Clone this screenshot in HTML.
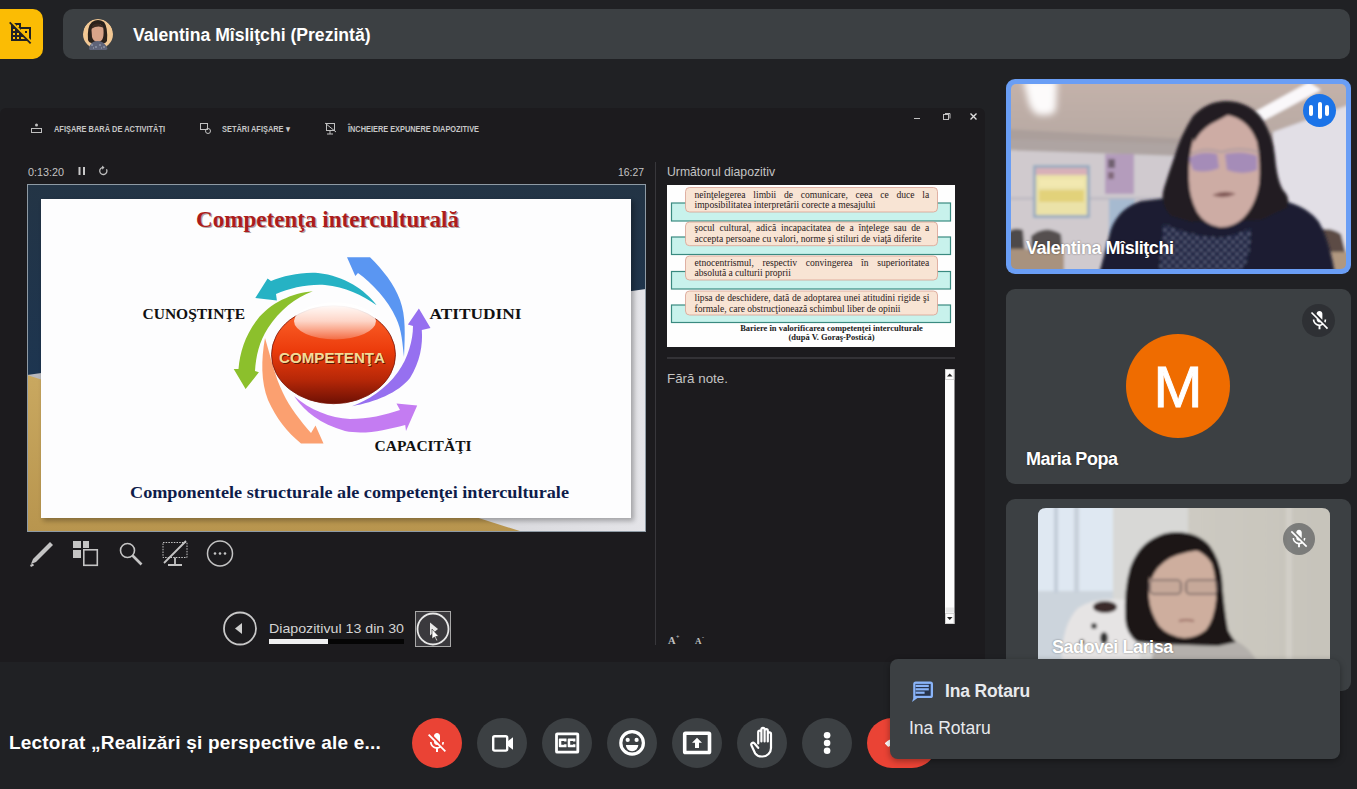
<!DOCTYPE html>
<html><head><meta charset="utf-8">
<style>
*{margin:0;padding:0;box-sizing:border-box}
html,body{width:1357px;height:789px;overflow:hidden;background:#202124;font-family:"Liberation Sans",sans-serif;position:relative}
.a{position:absolute}
.t{position:absolute;white-space:nowrap;line-height:1}
.btn{position:absolute;top:718px;width:50px;height:50px;border-radius:25px;background:#3c4043}
.btn svg{position:absolute;left:10px;top:10px;width:30px;height:30px;fill:#fff}
.name{position:absolute;white-space:nowrap;line-height:1;color:#fff;font-weight:bold;font-size:18px;letter-spacing:-.45px;text-shadow:0 0 2px rgba(0,0,0,.45)}
</style></head><body>

<!-- top bar -->
<div class="a" style="left:-10px;top:9px;width:53px;height:50px;border-radius:10px;background:#fbbc04"></div>
<svg class="a" style="left:8.5px;top:20px;width:24px;height:24px" viewBox="0 0 24 24"><path fill="#202124" d="M8 5h2v2h-.9L12 9.9V9h8v8.9l2 2V7H12V3H5.1L8 5.9zm8 6h2v2h-2zM1.3 1.8L.1 3.1 2 5v16h16l3 3 1.3-1.3-21-20.9zM6 19H4v-2h2v2zm0-4H4v-2h2v2zm0-4H4V9h2v2zm4 8H8v-2h2v2zm0-4H8v-2h2v2zm2 4v-2h2l2 2h-4z"/></svg>
<div class="a" style="left:63px;top:9px;width:1287px;height:50px;border-radius:10px;background:#3c4043"></div>
<svg class="a" style="left:78px;top:14px" width="40" height="40" viewBox="0 0 40 40"><defs><filter id="ba" x="-20%" y="-20%" width="140%" height="140%"><feGaussianBlur stdDeviation="0.6"/></filter><clipPath id="ca"><path d="M5 20A15 15 0 0 1 35 20V40H5z"/></clipPath></defs>
<g filter="url(#ba)"><g clip-path="url(#ca)"><circle cx="20" cy="20" r="15" fill="#f2c894"/></g>
<path d="M10 26 Q9 12 14 8 Q20 4 26 8 Q30 13 29 27 Q27 30 25 29 L14 29 Q11 29 10 26z" fill="#2c201c"/>
<path d="M13.5 16 Q14 10 20 10 Q25.5 10.5 25.5 16 Q26 23 24 26 Q21.5 28.5 19 28 Q15 27 14 23z" fill="#d8a48a"/>
<path d="M13 15 Q15 9 20 9.5 Q24 10 26 14 Q22 11.5 17 13z" fill="#3a2a22"/>
<path d="M11 35 Q12 27 19.5 27 Q27 27 29.5 35 L28 36 L12 36z" fill="#5e6478"/>
<path d="M13 31h2M17 33h2M21 31h2M25 33h2M15 34h1M23 34h1" stroke="#a4aabb" stroke-width="1"/>
</g></svg>
<div class="t" style="left:133px;top:26.5px;font-size:17.6px;font-weight:bold;color:#fff">Valentina Mîsliţchi (Prezintă)</div>

<!-- presentation window -->
<div class="a" id="pres" style="left:0;top:108px;width:985px;height:554px;background:#1c1b1e;border-radius:6px 6px 0 0"></div>
<svg class="a" style="left:0;top:0" width="1357" height="789" viewBox="0 0 1357 789">
<defs>
  <linearGradient id="ball" x1="0" y1="0" x2="0" y2="1">
    <stop offset="0" stop-color="#ff6a30"/>
    <stop offset="0.45" stop-color="#ec3c0c"/>
    <stop offset="0.75" stop-color="#b82808"/>
    <stop offset="1" stop-color="#6e1004"/>
  </linearGradient>
  <linearGradient id="hl" x1="0" y1="0" x2="0" y2="1">
    <stop offset="0" stop-color="#fff" stop-opacity="1"/>
    <stop offset="0.5" stop-color="#fff" stop-opacity="0.75"/>
    <stop offset="1" stop-color="#fff" stop-opacity="0.2"/>
  </linearGradient>
  <linearGradient id="gray" x1="0" y1="0" x2="1" y2="0">
    <stop offset="0" stop-color="#b8b8bc"/>
    <stop offset="1" stop-color="#e4e4e8"/>
  </linearGradient>
  <linearGradient id="blue" x1="0" y1="0" x2="0" y2="1">
    <stop offset="0" stop-color="#233445"/>
    <stop offset="1" stop-color="#1d3550"/>
  </linearGradient>
  <linearGradient id="gold" x1="0" y1="0" x2="0" y2="1">
    <stop offset="0" stop-color="#c9a860"/>
    <stop offset="1" stop-color="#b8954e"/>
  </linearGradient>
</defs>
<!-- toolbar -->
<g fill="#c6c6c6" font-family="Liberation Sans" font-weight="bold" font-size="8.5">
  <text x="54" y="132" textLength="111" lengthAdjust="spacingAndGlyphs">AFIŞARE BARĂ DE ACTIVITĂŢI</text>
  <text x="222" y="132" textLength="68" lengthAdjust="spacingAndGlyphs">SETĂRI AFIŞARE ▾</text>
  <text x="348" y="132" textLength="131" lengthAdjust="spacingAndGlyphs">ÎNCHEIERE EXPUNERE DIAPOZITIVE</text>
</g>
<g stroke="#c0c0c0" fill="none" stroke-width="1">
  <rect x="31.5" y="128.5" width="10" height="4"/><circle cx="36.5" cy="125" r="1.5" fill="#c0c0c0" stroke="none"/>
  <rect x="200.5" y="123.5" width="7" height="6"/><circle cx="208" cy="131" r="2.5"/>
  <rect x="326.5" y="123.5" width="8" height="7"/><path d="M330 131v3M327 134h6M325 123l11 9"/>
  <path d="M914 118.5h6"/>
  <rect x="943.5" y="114.5" width="5" height="5"/><path d="M945 113.5h5v5"/>
  <path d="M970.5 113.5l6 6M976.5 113.5l-6 6" stroke-width="1.4" stroke="#e0e0e0"/>
</g>
<g fill="#c4c4c4" font-family="Liberation Sans" font-size="11.5">
  <text x="28" y="175.5" textLength="36" lengthAdjust="spacingAndGlyphs">0:13:20</text>
  <text x="618" y="175.5" textLength="26" lengthAdjust="spacingAndGlyphs">16:27</text>
  <text x="667" y="175.5" font-size="12.2" textLength="108" lengthAdjust="spacingAndGlyphs">Următorul diapozitiv</text>
  <text x="667" y="382.5" font-size="13" textLength="61" lengthAdjust="spacingAndGlyphs">Fără note.</text>
</g>
<rect x="78.5" y="167" width="2" height="8" fill="#c8c8c8"/><rect x="83" y="167" width="2" height="8" fill="#c8c8c8"/>
<path d="M106.5 169.2a3.6 3.6 0 1 1 -3.2 -1.9" stroke="#c0c0c0" stroke-width="1.3" fill="none"/><path d="M102 165.5l2.5 2-2.2 2.2z" fill="#c0c0c0"/>

<!-- dividers -->
<rect x="655" y="162" width="1" height="483" fill="#38373b"/>
<rect x="667" y="357" width="288" height="2" fill="#333236"/>

<!-- main slide -->
<rect x="27" y="184" width="619" height="348" fill="url(#gray)"/>
<polygon points="27,184 646,184 646,289 27,375" fill="url(#blue)"/>
<polygon points="27,375 523,532 27,532" fill="url(#gold)"/>
<rect x="27.5" y="184.5" width="618" height="347" fill="none" stroke="#8e9aa4" stroke-width="1"/>
<filter id="sh" x="-5%" y="-5%" width="110%" height="110%"><feGaussianBlur stdDeviation="2.5"/></filter><rect x="43" y="201" width="591" height="320" fill="#000" opacity="0.28" filter="url(#sh)"/>
<rect x="41" y="199" width="590" height="319" fill="#fdfdfe"/>

<text x="196" y="227" font-family="Liberation Serif" font-weight="bold" font-size="23" fill="#b0a8a8" textLength="263" lengthAdjust="spacingAndGlyphs" transform="translate(1.2,1.2)">Competenţa interculturală</text>
<text x="196" y="227" font-family="Liberation Serif" font-weight="bold" font-size="23" fill="#ac1c1c" textLength="263" lengthAdjust="spacingAndGlyphs">Competenţa interculturală</text>
<g font-family="Liberation Serif" font-weight="bold" font-size="15.5" fill="#111">
  <text x="142.5" y="319" textLength="102.5" lengthAdjust="spacingAndGlyphs">CUNOŞTINŢE</text>
  <text x="429.5" y="319" textLength="92" lengthAdjust="spacingAndGlyphs">ATITUDINI</text>
  <text x="374.5" y="450.5" textLength="97" lengthAdjust="spacingAndGlyphs">CAPACITĂŢI</text>
</g>
<text x="130" y="498" font-family="Liberation Serif" font-weight="bold" font-size="16.5" fill="#0e1c4a" textLength="439" lengthAdjust="spacingAndGlyphs">Componentele  structurale ale competenţei interculturale</text>

<!-- arrows -->
<path fill="#26b2c4" d="M376.6 305.2 C365 290 345 276 318 273 C300 272 284 276 271 281 L267.6 278.6 L255.3 297.9 L276.9 300.6 L276 294 C290 288 308 284 325 285 C345 287 362 295 376.6 305.2Z"/>
<path fill="#5a96f2" d="M404 357 C405 335 406 316 400 300 C394 284 383 270 370 257.3 L347 257.3 L355.3 276 L358 273 C372 283 388 300 396 318 C402 330 402.5 345 404 357Z"/>
<path fill="#9670f0" d="M352 406.2 C375 402 398 393 410 378 C420 362 423 345 421.8 330 L430.5 327.9 L418.9 308.6 L407.9 324.5 L413 326 C413 340 408 358 398 372 C385 390 368 400 352 406.2Z"/>
<path fill="#c47cf2" d="M294.2 396.3 C305 412 320 424 345 431 C365 435 385 430 405.2 424.9 L406 431 L417.2 405.6 L396.5 403.6 L400 410 C385 415 368 419 350 419 C330 418 310 410 294.2 396.3Z"/>
<path fill="#fba070" d="M265 338 C261 360 261 382 268 400 C276 418 287 432 301 443.5 L323.5 443.5 L315.5 425.5 L311 433 C300 420 290 408 283 393 C275 377 271 358 265 338Z"/>
<path fill="#8cc02c" d="M312.8 291.3 C292 293 270 303 257 320 C245 336 240 352 238.5 369 L233.7 369 L245.6 388.9 L258.9 372.3 L255 371 C256 356 259 342 268 328 C280 310 295 298 312.8 291.3Z"/>

<!-- ball -->
<ellipse cx="333.5" cy="354.7" rx="62" ry="49" fill="url(#ball)" stroke="#7a1406" stroke-width="0.8"/>
<ellipse cx="335" cy="321" rx="41" ry="18.5" fill="url(#hl)"/>
<text x="279" y="363" font-family="Liberation Sans" font-weight="bold" font-size="15" fill="#5a1a08" textLength="106" lengthAdjust="spacingAndGlyphs" transform="translate(0.7,0.7)">COMPETENŢA</text>
<text x="279" y="363" font-family="Liberation Sans" font-weight="bold" font-size="15" fill="#f2dc98" textLength="106" lengthAdjust="spacingAndGlyphs">COMPETENŢA</text>

<!-- next slide thumb -->
<rect x="667" y="185" width="288" height="162" fill="#fefefe"/>
<g fill="#c8f2ec" stroke="#3a8a80" stroke-width="1.2">
  <rect x="671.5" y="203" width="279" height="18"/>
  <rect x="671.5" y="237" width="279" height="17.5"/>
  <rect x="671.5" y="271.5" width="279" height="17.5"/>
  <rect x="671.5" y="305" width="279" height="17.5"/>
</g>
<g fill="#f8e4d4" stroke="#d8a090" stroke-width="0.8">
  <rect x="685.5" y="187.5" width="252" height="24.5" rx="4"/>
  <rect x="685.5" y="222" width="252" height="23.7" rx="4"/>
  <rect x="685.5" y="256" width="252" height="24" rx="4"/>
  <rect x="685.5" y="291" width="252" height="24" rx="4"/>
</g>
<g font-family="Liberation Serif" font-size="9.6" fill="#2a2020" lengthAdjust="spacingAndGlyphs">
  <text x="694.5" y="197.5" word-spacing="5.3">neînţelegerea limbii de comunicare, ceea ce duce la</text>
  <text x="694.5" y="207.8" textLength="181">imposibilitatea interpretării corecte a mesajului</text>
  <text x="694.5" y="231.2" word-spacing="2.36">şocul cultural, adică incapacitatea de a înţelege sau de a</text>
  <text x="694.5" y="241.6" textLength="227">accepta persoane cu valori, norme şi stiluri de viaţă diferite</text>
  <text x="694.5" y="266" word-spacing="6.17">etnocentrismul, respectiv convingerea în superioritatea</text>
  <text x="694.5" y="276.2" textLength="96.3">absolută a culturii proprii</text>
  <text x="694.5" y="300.8" word-spacing="0.34">lipsa de deschidere, dată de adoptarea unei atitudini rigide şi</text>
  <text x="694.5" y="311.6" textLength="206">formale, care obstrucţionează schimbul liber de opinii</text>
</g>
<g font-family="Liberation Serif" font-weight="bold" font-size="8.5" fill="#1a1a1a" text-anchor="middle">
  <text x="831.5" y="330.5" textLength="182.6" lengthAdjust="spacingAndGlyphs">Bariere în valorificarea competenţei interculturale</text>
  <text x="831.5" y="340" textLength="86" lengthAdjust="spacingAndGlyphs">(după V. Goraş-Postică)</text>
</g>

<!-- notes scrollbar -->
<rect x="945" y="369" width="9.5" height="255" fill="#fcfcfc"/>
<rect x="945.5" y="369.5" width="8.5" height="10" fill="none" stroke="#c8c8c8" stroke-width="0.8"/>
<path d="M947 376.5h5.5l-2.75-3z" fill="#222"/>
<rect x="945.5" y="613.5" width="8.5" height="10" fill="none" stroke="#c8c8c8" stroke-width="0.8"/>
<path d="M947 617h5.5l-2.75 3z" fill="#222"/>
<rect x="945.5" y="607.5" width="8.5" height="5" fill="#e8e8e8"/>
<g font-family="Liberation Serif" font-weight="bold" fill="#c0c0c0">
  <text x="668" y="644" font-size="10.5">A</text><text x="676" y="639" font-size="6">+</text>
  <text x="695" y="644" font-size="9">A</text><text x="702" y="639" font-size="6">-</text>
</g>

<!-- slide tools -->
<g stroke="#c4c4c4" fill="none" stroke-width="1.6">
  <path d="M31 564l2-5 17-17 3 3-17 17z" fill="#c4c4c4" stroke="none"/>
  <path d="M30.5 566l3-1.5" stroke-width="2"/>
  <rect x="73" y="541" width="8" height="7" fill="#c4c4c4" stroke="none"/>
  <rect x="73" y="550" width="8" height="8" fill="#c4c4c4" stroke="none"/>
  <rect x="83" y="541" width="6" height="7" fill="#c4c4c4" stroke="none"/>
  <rect x="83.8" y="549.8" width="13.5" height="15.5"/>
  <circle cx="127.5" cy="550.5" r="7"/>
  <path d="M132.5 555.5l9 9" stroke-width="2.6"/>
  <path d="M163 542.5h24v15h-24z" stroke-dasharray="1.5 1.2" stroke-width="1"/>
  <path d="M186 541l-22 22M175 557.5v7M168 565h14" stroke-width="1.8"/>
  <circle cx="220" cy="553.5" r="12.5" stroke-width="1.5"/>
  <circle cx="215" cy="553.5" r="1.3" fill="#c4c4c4" stroke="none"/>
  <circle cx="220" cy="553.5" r="1.3" fill="#c4c4c4" stroke="none"/>
  <circle cx="225" cy="553.5" r="1.3" fill="#c4c4c4" stroke="none"/>
</g>
<!-- navigator -->
<circle cx="240" cy="628.5" r="16" stroke="#c8c8c8" stroke-width="1.8" fill="none"/>
<path d="M235 628.5l7-5.5v11z" fill="#d0d0d0"/>
<text x="269" y="633" font-family="Liberation Sans" font-size="13" fill="#d4d4d4" textLength="135" lengthAdjust="spacingAndGlyphs">Diapozitivul 13 din 30</text>
<rect x="269" y="639" width="135" height="5" fill="#050505"/>
<rect x="269" y="639" width="59" height="5" fill="#f0f0f0"/>
<rect x="415.5" y="611.5" width="35" height="35" fill="#3a393d" stroke="#a8a8a8" stroke-width="1"/>
<circle cx="433" cy="629" r="15.5" stroke="#e8e8e8" stroke-width="1.8" fill="none"/>
<path d="M430 622.5l8 6.5-8 6.5z" fill="#e8e8e8"/>
<path d="M432 629l0 10 2.5-2 2 4 1.2-.6-2-3.8 3-.3z" fill="#fff" stroke="#222" stroke-width="0.6"/>
</svg>


<!-- right tiles -->
<div class="a" style="left:1006px;top:79px;width:345px;height:195px;border-radius:9px;background:#6a9ef5"></div>
<svg class="a" style="left:1011px;top:84px;border-radius:5px" width="335" height="185" viewBox="0 0 335 185">
<defs>
  <filter id="b1" x="-10%" y="-10%" width="120%" height="120%"><feGaussianBlur stdDeviation="1.8"/></filter>
  <filter id="b2" x="-20%" y="-20%" width="140%" height="140%"><feGaussianBlur stdDeviation="3"/></filter>
  <linearGradient id="ceil" x1="0" y1="0" x2="0" y2="1"><stop offset="0" stop-color="#c4b2aa"/><stop offset="1" stop-color="#b6a8a2"/></linearGradient>
  <linearGradient id="wall" x1="0" y1="0" x2="1" y2="0"><stop offset="0" stop-color="#d0cace"/><stop offset="0.6" stop-color="#cfcacf"/><stop offset="1" stop-color="#e2dfe6"/></linearGradient>
  <pattern id="dots" width="8" height="8" patternUnits="userSpaceOnUse"><rect width="8" height="8" fill="#222845"/><circle cx="2" cy="2" r="1" fill="#9098b8"/><circle cx="6" cy="6" r="1" fill="#9098b8"/></pattern>
</defs>
<g filter="url(#b1)">
<rect x="-5" y="-5" width="345" height="195" fill="url(#wall)"/>
<polygon points="-5,-5 340,-5 340,20 262,52 230,62 -5,55" fill="url(#ceil)"/>
<polygon points="-5,45 230,58 262,48 340,20 340,34 262,64 230,74 -5,66" fill="#a89e9a" opacity="0.85"/>
<polygon points="262,48 340,20 340,185 262,185" fill="#e2dfe6"/>
<path d="M12 -5 L46 -5 L45 24 Q44 31 36 31 L28 31 Q22 30 18 20z" fill="#fdfbfb" filter="url(#b2)"/>
<polygon points="240,30 298,-2 310,6 250,38" fill="#faf8fa"/>
<rect x="-5" y="113" width="220" height="3" fill="#c0bcc4"/>
<rect x="22" y="81" width="57" height="53" fill="#9aacc0"/>
<rect x="25" y="84" width="51" height="47" fill="#ebe2a8"/>
<rect x="25" y="84" width="51" height="7" fill="#d8b0b8"/>
<rect x="28" y="95" width="45" height="8" fill="#f2e8b0"/>
<rect x="28" y="106" width="45" height="12" fill="#e2d27a"/>
<rect x="94" y="70" width="29" height="40" fill="#b49cbc"/>
<rect x="97" y="75" width="7" height="9" fill="#706070"/>
<rect x="97" y="88" width="6" height="7" fill="#806878"/>
<rect x="98" y="115" width="26" height="37" fill="#a6bad0"/>
<path d="M-5 150 Q2 142 12 146 L14 170 L-5 172z" fill="#4e4848"/><path d="M20 152 Q34 140 50 150 L52 172 L20 172z" fill="#545050"/>
<rect x="-5" y="165" width="58" height="25" fill="#a8927e"/>
<path d="M300 150 Q315 140 330 150 L340 190 L298 190z" fill="#5c4c44"/>
<rect x="310" y="168" width="30" height="20" fill="#b09880"/>
</g>
<g filter="url(#b1)">
<path d="M88 190 L100 145 Q108 124 130 117 L165 113 L270 116 Q296 122 308 138 Q318 155 324 190z" fill="#1a1f33"/>
<path d="M216 17 Q240 18 252 36 Q262 52 264 72 Q266 96 272 106 Q280 114 276 124 L250 136 L180 138 L160 132 Q148 120 153 104 Q158 88 163 74 Q170 50 182 32 Q196 17 216 17z" fill="#211c24"/>
<path d="M206 30 Q236 30 246 58 Q250 80 248 100 Q244 124 230 136 Q220 144 208 143 Q194 141 186 128 Q178 112 178 96 Q177 74 182 56 Q190 32 206 30z" fill="#cdaca4"/>
<path d="M182 45 Q196 26 222 28 Q212 34 200 40 Q190 46 183 58z" fill="#211c24"/>
<path d="M148 190 L152 140 Q180 152 208 154 Q226 151 240 144 L238 170 L230 190z" fill="url(#dots)"/>
<path d="M178 74 Q190 66 206 70 L208 84 Q194 90 182 86z" fill="#7d6ccc" opacity="0.5"/>
<path d="M214 70 Q232 66 246 72 L246 86 Q232 92 216 86z" fill="#7d6ccc" opacity="0.5"/>
<path d="M180 70 Q194 62 210 68 Q228 62 248 68" stroke="#a89aa0" stroke-width="1.5" fill="none"/>
<path d="M204 111 Q213 107 222 110 Q213 114 204 111z" stroke="#8c6460" stroke-width="2" fill="#6a4440"/>
</g>
</svg>
<div class="a" style="left:1303px;top:94px;width:33px;height:33px;border-radius:17px;background:#1a73e8"></div>
<div class="a" style="left:1309px;top:105px;width:4px;height:10.5px;border-radius:2px;background:#fff"></div>
<div class="a" style="left:1317.5px;top:101.5px;width:4px;height:17.5px;border-radius:2px;background:#fff"></div>
<div class="a" style="left:1325px;top:105px;width:4px;height:10.5px;border-radius:2px;background:#fff"></div>
<div class="name" style="left:1026px;top:239.3px">Valentina Mîsliţchi</div>


<div class="a" style="left:1006px;top:289px;width:345px;height:195px;border-radius:9px;background:#3c4043"></div>
<div class="a" style="left:1126px;top:334px;width:104px;height:104px;border-radius:52px;background:#ef6c00"></div>
<div class="t" style="left:1138px;top:357.5px;font-size:56px;color:#fff;width:80px;text-align:center;transform:scaleX(1.05) scaleY(1.04);transform-origin:40px 0;-webkit-text-stroke:.9px #fff">M</div>
<div class="a" style="left:1302px;top:304px;width:33px;height:33px;border-radius:17px;background:#2e3034"></div>
<svg class="a" style="left:1308px;top:309px" width="23" height="23" viewBox="0 0 24 24"><path fill="#fff" d="M19 11h-1.7c0 .74-.16 1.43-.43 2.05l1.23 1.23c.56-.98.9-2.09.9-3.28zm-4.02.17c0-.06.02-.11.02-.17V5c0-1.66-1.34-3-3-3S9 3.34 9 5v.18l5.98 5.99zM4.27 3L3 4.27l6.01 6.01V11c0 1.66 1.33 3 2.99 3 .22 0 .44-.03.65-.08l1.66 1.66c-.71.33-1.5.52-2.31.52-2.76 0-5.3-2.1-5.3-5.1H5c0 3.41 2.72 6.23 6 6.72V21h2v-3.28c.91-.13 1.77-.45 2.54-.9L19.73 21 21 19.73 4.27 3z"/></svg>
<div class="name" style="left:1026px;top:449.5px">Maria Popa</div>

<div class="a" style="left:1006px;top:499px;width:345px;height:192px;border-radius:9px;background:#3c4043"></div>
<svg class="a" style="left:1038px;top:508px" width="292" height="151" viewBox="0 0 292 151">
<defs>
  <clipPath id="c3"><path d="M8 0H284Q292 0 292 8V151H0V8Q0 0 8 0z"/></clipPath>
  <filter id="b3" x="-10%" y="-10%" width="120%" height="120%"><feGaussianBlur stdDeviation="1.4"/></filter>
  <linearGradient id="w3" x1="0" y1="0" x2="1" y2="0"><stop offset="0" stop-color="#d6d4d0"/><stop offset="0.5" stop-color="#cdcac2"/><stop offset="1" stop-color="#c6c3ba"/></linearGradient>
</defs>
<g clip-path="url(#c3)"><g filter="url(#b3)">
<rect x="-5" y="-5" width="302" height="165" fill="url(#w3)"/>
<rect x="-5" y="-5" width="80" height="88" fill="#dfe8f2"/>
<rect x="-5" y="83" width="80" height="80" fill="#ccd4dc"/>
<rect x="16" y="-5" width="4" height="90" fill="#c2ccd8"/>
<rect x="36" y="-5" width="5" height="90" fill="#c8d0da"/>
<rect x="75" y="-5" width="75" height="165" fill="#d8d8d6"/>
<rect x="248" y="-5" width="6" height="165" fill="#d2cfc8"/>
<path d="M24 160 Q22 118 40 100 Q58 88 88 92 L96 118 L104 160z" fill="#e6e4e4"/>
<ellipse cx="67" cy="99" rx="12" ry="6" fill="#3a2c2c"/><circle cx="56" cy="118" r="3" fill="#444"/><ellipse cx="66" cy="130" rx="4" ry="6" fill="#333"/><circle cx="44" cy="134" r="2.5" fill="#555"/>
<path d="M112 160 L118 130 Q150 126 190 130 Q212 136 222 160z" fill="#b4b0ac"/>
<path d="M138 24 Q160 24 172 38 Q182 52 184 70 Q186 100 190 122 Q194 130 198 134 L180 138 L120 136 L99 134 Q88 126 87 110 Q86 80 92 60 Q100 38 116 30 Q126 24 138 24z" fill="#1b1717"/>
<path d="M140 38 Q165 40 174 56 Q179 72 178 92 Q176 112 168 122 Q158 130 146 130 Q130 128 121 118 Q112 104 111 90 Q110 72 113 64 Q122 40 140 38z" fill="#ceae9e"/>
<path d="M111 66 Q118 44 136 36 Q154 34 168 42 Q150 42 132 50 Q118 58 113 72z" fill="#1b1717"/>
<rect x="112" y="72" width="31" height="14" rx="4" fill="#a89088" fill-opacity="0.2" stroke="#4a4248" stroke-width="1.2"/>
<rect x="148" y="72" width="32" height="14" rx="4" fill="#a89088" fill-opacity="0.2" stroke="#4a4248" stroke-width="1.2"/>
<path d="M141 113 Q148 111 156 113" stroke="#9a6c64" stroke-width="2" fill="none"/>
</g></g>
</svg>
<div class="a" style="left:1283px;top:523px;width:32px;height:32px;border-radius:16px;background:rgba(60,64,67,.55)"></div>
<svg class="a" style="left:1288px;top:528px" width="22" height="22" viewBox="0 0 24 24"><path fill="#fff" d="M19 11h-1.7c0 .74-.16 1.43-.43 2.05l1.23 1.23c.56-.98.9-2.09.9-3.28zm-4.02.17c0-.06.02-.11.02-.17V5c0-1.66-1.34-3-3-3S9 3.34 9 5v.18l5.98 5.99zM4.27 3L3 4.27l6.01 6.01V11c0 1.66 1.33 3 2.99 3 .22 0 .44-.03.65-.08l1.66 1.66c-.71.33-1.5.52-2.31.52-2.76 0-5.3-2.1-5.3-5.1H5c0 3.41 2.72 6.23 6 6.72V21h2v-3.28c.91-.13 1.77-.45 2.54-.9L19.73 21 21 19.73 4.27 3z"/></svg>
<div class="name" style="left:1052px;top:638px">Sadovei Larisa</div>


<!-- bottom bar -->
<div class="t" style="left:9px;top:732.5px;font-size:19px;font-weight:bold;color:#fff;letter-spacing:.2px">Lectorat „Realizări și perspective ale e...</div>
<div class="btn" style="left:412px;background:#ea4335"></div>
<svg class="a" style="left:425px;top:731px" width="24" height="24" viewBox="0 0 24 24"><path fill="#fff" d="M19 11h-1.7c0 .74-.16 1.43-.43 2.05l1.23 1.23c.56-.98.9-2.09.9-3.28zm-4.02.17c0-.06.02-.11.02-.17V5c0-1.66-1.34-3-3-3S9 3.34 9 5v.18l5.98 5.99zM4.27 3L3 4.27l6.01 6.01V11c0 1.66 1.33 3 2.99 3 .22 0 .44-.03.65-.08l1.66 1.66c-.71.33-1.5.52-2.31.52-2.76 0-5.3-2.1-5.3-5.1H5c0 3.41 2.72 6.23 6 6.72V21h2v-3.28c.91-.13 1.77-.45 2.54-.9L19.73 21 21 19.73 4.27 3z"/></svg>
<div class="btn" style="left:477px"></div>
<svg class="a" style="left:477px;top:718px" width="50" height="50" viewBox="0 0 50 50"><rect x="16.2" y="18.2" width="14" height="14.4" rx="1.5" fill="none" stroke="#fff" stroke-width="2.4"/><path d="M30.5 23.5l5.5-4.2v12.4l-5.5-4.2z" fill="#fff"/></svg>
<div class="btn" style="left:542px"></div>
<svg class="a" style="left:542px;top:718px" width="50" height="50" viewBox="0 0 50 50"><rect x="14.5" y="15.8" width="21.3" height="18.4" rx="0.8" fill="none" stroke="#fff" stroke-width="2.8"/><path d="M24.5 20.6H17.6Q16.8 20.6 16.8 21.4V28.4Q16.8 29.2 17.6 29.2H24.5V26.2H22.1V26.8H19.3V23H22.1V23.6H24.5ZM33.4 20.6H26.5Q25.7 20.6 25.7 21.4V28.4Q25.7 29.2 26.5 29.2H33.4V26.2H31V26.8H28.2V23H31V23.6H33.4Z" fill="#fff"/></svg>
<div class="btn" style="left:607px"></div>
<svg class="a" style="left:607px;top:718px" width="50" height="50" viewBox="0 0 50 50"><circle cx="25.1" cy="24.9" r="11.3" fill="none" stroke="#fff" stroke-width="3.2"/><circle cx="20.7" cy="21.9" r="2.1" fill="#fff"/><circle cx="29.6" cy="21.9" r="2.1" fill="#fff"/><path d="M18.9 27h12.4a6.2 6.2 0 0 1 -12.4 0z" fill="#fff"/></svg>
<div class="btn" style="left:672px"></div>
<svg class="a" style="left:672px;top:718px" width="50" height="50" viewBox="0 0 50 50"><rect x="12.7" y="15.3" width="24.8" height="19.2" rx="0.8" fill="none" stroke="#fff" stroke-width="3.6"/><path d="M25 19.8l-5 5h3v5.2h4v-5.2h3z" fill="#fff"/></svg>
<div class="btn" style="left:737px"></div>
<svg class="a" style="left:737px;top:718px" width="50" height="50" viewBox="0 0 50 50"><path d="M21.2 25.5V14.3a1.6 1.6 0 0 1 3.2 0V23.5M24.4 23.5V11.5a1.6 1.6 0 0 1 3.2 0V23.5M27.6 23.5V12.8a1.6 1.6 0 0 1 3.2 0V23.5M30.8 23.5V16a1.6 1.6 0 0 1 3.2 0V30a8.5 8.5 0 0 1 -8.5 8.5h-1a8 8 0 0 1 -6.4 -3.2L14.5 27.5a1.8 1.8 0 0 1 2.8 -2.2l3.9 4.5" fill="none" stroke="#fff" stroke-width="2.2" stroke-linejoin="round" stroke-linecap="round"/></svg>
<div class="btn" style="left:802px"></div>
<svg class="a" style="left:802px;top:718px" width="50" height="50" viewBox="0 0 50 50"><circle cx="25.1" cy="17.3" r="3.3" fill="#fff"/><circle cx="25.1" cy="25" r="3.3" fill="#fff"/><circle cx="25.1" cy="32.7" r="3.3" fill="#fff"/></svg>
<div class="btn" style="left:867px;width:70px;background:#ea4335"></div>
<svg class="a" style="left:885px;top:731px" width="24" height="24" viewBox="0 0 24 24"><path fill="#fff" d="M12 9c-1.6 0-3.15.25-4.6.72v3.1c0 .39-.23.74-.56.9-.98.49-1.87 1.12-2.66 1.85-.18.18-.43.28-.7.28-.28 0-.53-.11-.71-.29L.29 13.08c-.18-.17-.29-.42-.29-.7 0-.28.11-.53.29-.71C3.34 8.78 7.46 7 12 7s8.66 1.78 11.71 4.67c.18.18.29.43.29.71 0 .28-.11.53-.29.71l-2.48 2.48c-.18.18-.43.29-.71.29-.27 0-.52-.11-.7-.28-.79-.74-1.69-1.36-2.67-1.85-.33-.16-.56-.5-.56-.9v-3.1C15.15 9.25 13.6 9 12 9z"/></svg>
<!-- popup -->
<div class="a" style="left:890px;top:659px;width:450px;height:100px;border-radius:8px;background:#3c4043;box-shadow:0 2px 6px rgba(0,0,0,.35)"></div>
<svg class="a" style="left:900px;top:670px" width="40" height="40" viewBox="0 0 40 40"><path d="M13.2 28.5V14.2Q13.2 11.6 15.8 11.6H30.5Q33 11.6 33 14.2V25.4Q33 28 30.5 28H17.5L12 32z" fill="#8ab4f8"/><rect x="15.4" y="13.9" width="15.3" height="11.9" fill="#27344c"/><rect x="15.6" y="14.8" width="13.2" height="2.2" fill="#8ab4f8"/><rect x="15.6" y="18.2" width="13.2" height="2.2" fill="#8ab4f8"/><rect x="15.6" y="21.6" width="9" height="2.2" fill="#8ab4f8"/></svg>
<div class="t" style="left:945px;top:682.5px;font-size:17.5px;font-weight:bold;color:#e8eaed;letter-spacing:-.15px">Ina Rotaru</div>
<div class="t" style="left:909px;top:719.5px;font-size:17.5px;color:#e8eaed">Ina Rotaru</div>

</body></html>
